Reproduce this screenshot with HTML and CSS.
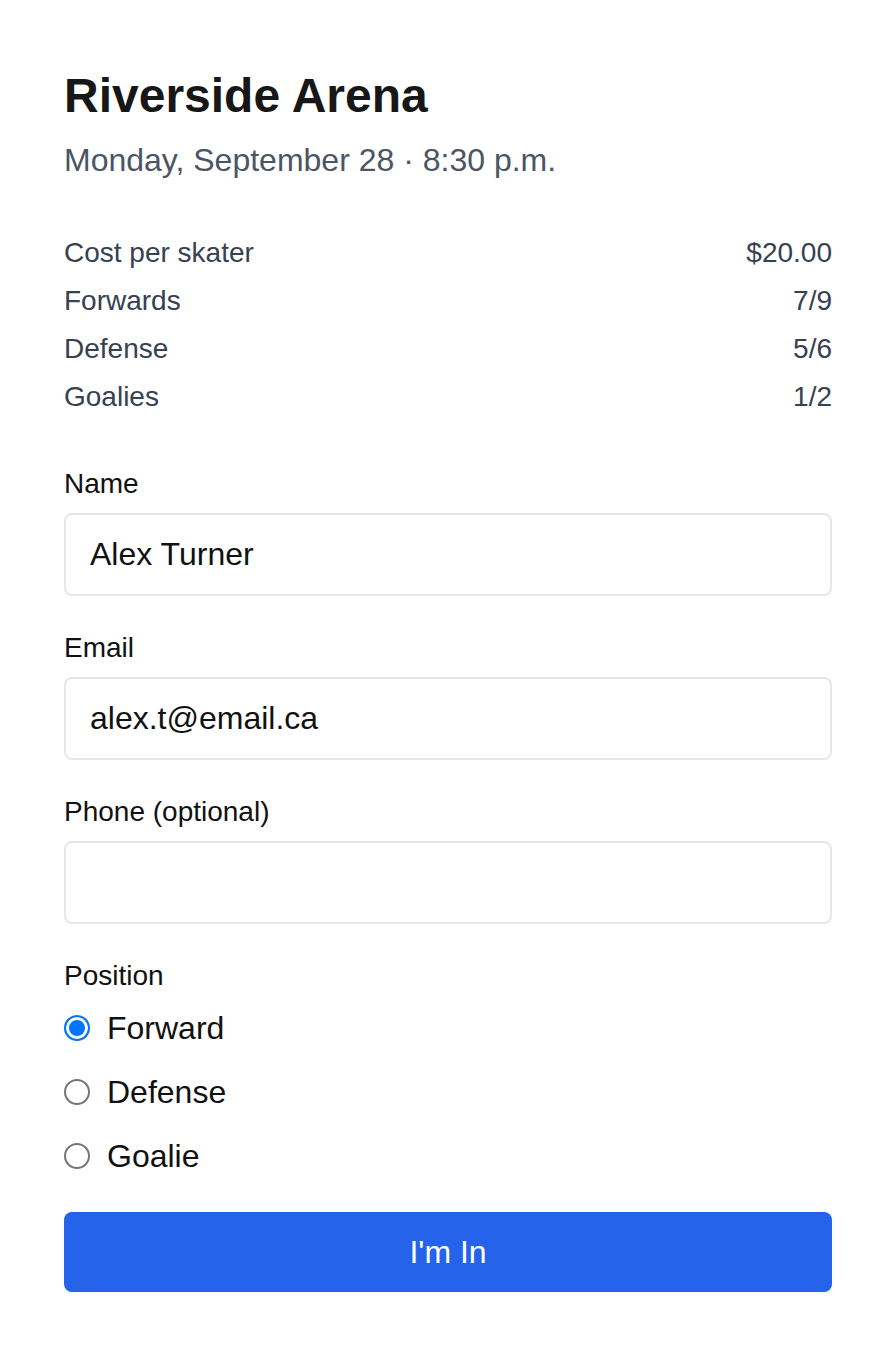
FILE: index.html
```html
<!DOCTYPE html>
<html lang="en">
<head>
    <meta charset="UTF-8">
    <meta name="viewport" content="width=device-width, initial-scale=1.0">
    <title>Riverside Arena - Sign Up</title>
    <link rel="stylesheet" href="styles.css">
</head>
<body>

<div class="signup">
    <h1>Riverside Arena</h1>
    <p class="when">Monday, September 28 · 8:30 p.m.</p>

    <div class="stats">
        <div class="stat-row"><span>Cost per skater</span><span>$20.00</span></div>
        <div class="stat-row"><span>Forwards</span><span>7/9</span></div>
        <div class="stat-row"><span>Defense</span><span>5/6</span></div>
        <div class="stat-row"><span>Goalies</span><span>1/2</span></div>
    </div>

    <form class="signup-form">
        <div class="field">
            <label for="name">Name</label>
            <input type="text" id="name" value="Alex Turner">
        </div>
        <div class="field">
            <label for="email">Email</label>
            <input type="email" id="email" value="alex.t@email.ca">
        </div>
        <div class="field">
            <label for="phone">Phone (optional)</label>
            <input type="tel" id="phone">
        </div>
        <div class="field">
            <span class="field-label">Position</span>
            <div class="positions">
                <label class="position"><input type="radio" name="position" value="forward" checked> Forward</label>
                <label class="position"><input type="radio" name="position" value="defense"> Defense</label>
                <label class="position"><input type="radio" name="position" value="goalie"> Goalie</label>
            </div>
        </div>
        <button type="submit" class="submit-btn">I'm In</button>
    </form>
</div>

</body>
</html>
```

FILE: styles.css
```css
/* General Styles */
* {
    box-sizing: border-box;
    margin: 0;
    padding: 0;
}

body {
    font-family: "Liberation Sans", Arial, sans-serif;
    background: #fff;
    color: #111;
    padding: 64px;
}

.signup h1 {
    font-size: 48px;
    line-height: 64px;
    font-weight: bold;
    color: #171717;
}

.signup .when {
    margin-top: 8px;
    font-size: 32px;
    line-height: 48px;
    color: #4b5563;
}

/* Game stats */
.stats {
    margin-top: 45px;
}

.stat-row {
    display: flex;
    justify-content: space-between;
    font-size: 28px;
    line-height: 48px;
    color: #374151;
}

/* Form */
.signup-form {
    margin-top: 43px;
}

.field {
    margin-bottom: 32px;
}

.field label,
.field .field-label {
    display: block;
    font-size: 28px;
    line-height: 40px;
    margin-bottom: 9px;
    color: #111;
}

.field .field-label {
    margin-bottom: 8px;
}

.field input[type="text"],
.field input[type="email"],
.field input[type="tel"] {
    display: block;
    width: 100%;
    height: 83px;
    padding: 0 24px;
    border: 2px solid #e5e7eb;
    border-radius: 8px;
    font-family: inherit;
    font-size: 32px;
    color: #111;
    outline: none;
}

.positions {
    display: flex;
    flex-direction: column;
    gap: 16px;
}

.field .position {
    display: flex;
    align-items: center;
    gap: 17px;
    height: 48px;
    margin: 0;
    font-size: 32px;
    line-height: 48px;
    color: #111;
}

.position input[type="radio"] {
    appearance: none;
    -webkit-appearance: none;
    width: 26px;
    height: 26px;
    border: 2px solid #767676;
    border-radius: 50%;
    background: #fff;
    flex-shrink: 0;
}

.position input[type="radio"]:checked {
    border-color: #0075ff;
    background: #0075ff;
    box-shadow: inset 0 0 0 3px #fff;
}

.submit-btn {
    display: block;
    width: 100%;
    height: 80px;
    border: none;
    border-radius: 8px;
    background-color: #2563eb;
    color: #fff;
    font-family: inherit;
    font-size: 32px;
    cursor: pointer;
}
```
